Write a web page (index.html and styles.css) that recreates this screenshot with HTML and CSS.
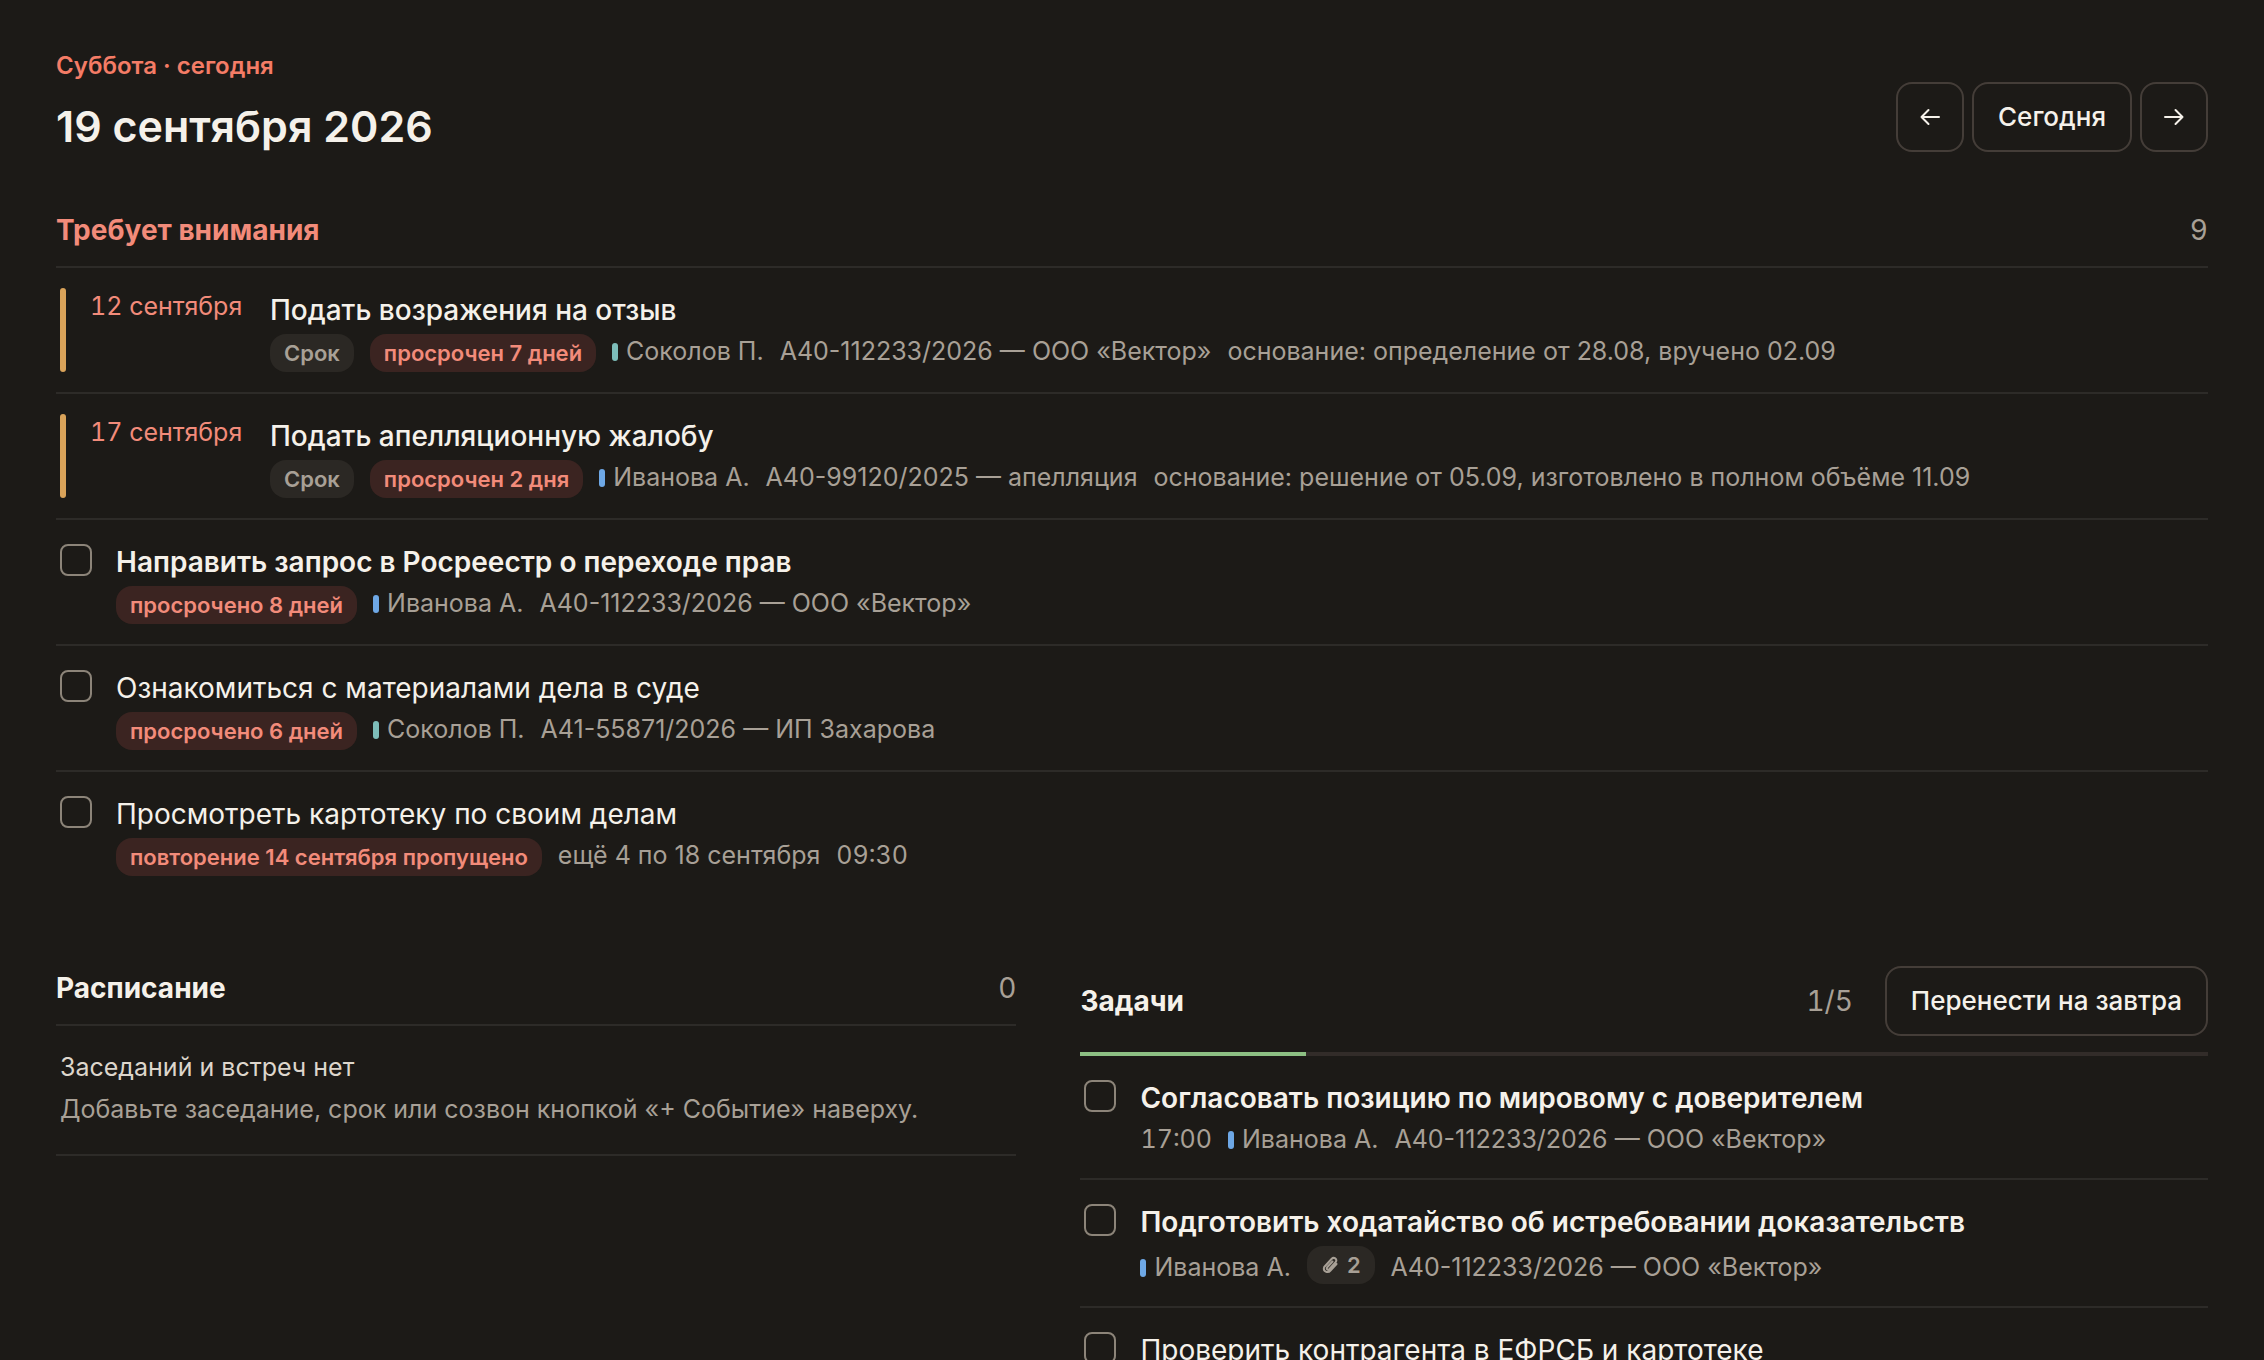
FILE: index.html
```
<!DOCTYPE html>
<html lang="ru">
<head>
    <meta charset="UTF-8">
    <meta name="viewport" content="width=device-width, initial-scale=1.0">
    <title>19 сентября 2026</title>
    <link rel="stylesheet" href="styles.css">
</head>
<body>
    <main class="day">
        <header class="day-header">
            <div>
                <p class="weekday">Суббота · сегодня</p>
                <h1>19 сентября 2026</h1>
            </div>
            <nav class="day-nav">
                <button class="btn btn-icon" aria-label="Предыдущий день">
                    <svg width="20" height="18" viewBox="0 0 20 18"><path d="M19 9H1.500M8.500 2L1.500 9L8.500 16"/></svg>
                </button>
                <button class="btn">Сегодня</button>
                <button class="btn btn-icon" aria-label="Следующий день">
                    <svg width="20" height="18" viewBox="0 0 20 18"><path d="M1 9H18.500M11.500 2L18.500 9L11.500 16"/></svg>
                </button>
            </nav>
        </header>

        <section class="attention">
            <div class="section-head">
                <h2 class="danger">Требует внимания</h2>
                <span class="count">9</span>
            </div>
            <ul class="list">
                <li class="row event">
                    <span class="event-bar"></span>
                    <span class="event-date">12 сентября</span>
                    <div class="row-body">
                        <div class="title medium">Подать возражения на отзыв</div>
                        <div class="meta">
                            <span class="chip">Срок</span>
                            <span class="chip overdue">просрочен 7 дней</span>
                            <span class="person teal">Соколов П.</span>
                            <span>А40-112233/2026 — ООО «Вектор»</span>
                            <span>основание: определение от 28.08, вручено 02.09</span>
                        </div>
                    </div>
                </li>
                <li class="row event">
                    <span class="event-bar"></span>
                    <span class="event-date">17 сентября</span>
                    <div class="row-body">
                        <div class="title medium">Подать апелляционную жалобу</div>
                        <div class="meta">
                            <span class="chip">Срок</span>
                            <span class="chip overdue">просрочен 2 дня</span>
                            <span class="person blue">Иванова А.</span>
                            <span>А40-99120/2025 — апелляция</span>
                            <span>основание: решение от 05.09, изготовлено в полном объёме 11.09</span>
                        </div>
                    </div>
                </li>
                <li class="row">
                    <input type="checkbox" id="late1">
                    <div class="row-body">
                        <label for="late1" class="title strong">Направить запрос в Росреестр о переходе прав</label>
                        <div class="meta">
                            <span class="chip overdue">просрочено 8 дней</span>
                            <span class="person blue">Иванова А.</span>
                            <span>А40-112233/2026 — ООО «Вектор»</span>
                        </div>
                    </div>
                </li>
                <li class="row">
                    <input type="checkbox" id="late2">
                    <div class="row-body">
                        <label for="late2" class="title">Ознакомиться с материалами дела в суде</label>
                        <div class="meta">
                            <span class="chip overdue">просрочено 6 дней</span>
                            <span class="person teal">Соколов П.</span>
                            <span>А41-55871/2026 — ИП Захарова</span>
                        </div>
                    </div>
                </li>
                <li class="row">
                    <input type="checkbox" id="late3">
                    <div class="row-body">
                        <label for="late3" class="title">Просмотреть картотеку по своим делам</label>
                        <div class="meta">
                            <span class="chip overdue">повторение 14 сентября пропущено</span>
                            <span>ещё 4 по 18 сентября</span>
                            <span class="time">09:30</span>
                        </div>
                    </div>
                </li>
            </ul>
        </section>

        <div class="columns">
            <section>
                <div class="section-head schedule-head">
                    <h2>Расписание</h2>
                    <span class="count">0</span>
                </div>
                <div class="empty">
                    <p class="empty-title">Заседаний и встреч нет</p>
                    <p>Добавьте заседание, срок или созвон кнопкой «+ Событие» наверху.</p>
                </div>
            </section>

            <section>
                <div class="section-head tasks-head">
                    <h2>Задачи</h2>
                    <span class="count">1/5</span>
                    <button class="btn">Перенести на завтра</button>
                </div>
                <div class="progress"><div class="progress-fill" style="width: 20%"></div></div>
                <ul class="list">
                    <li class="row">
                        <input type="checkbox" id="task1">
                        <div class="row-body">
                            <label for="task1" class="title strong">Согласовать позицию по мировому с доверителем</label>
                            <div class="meta">
                                <span class="time">17:00</span>
                                <span class="person blue">Иванова А.</span>
                                <span>А40-112233/2026 — ООО «Вектор»</span>
                            </div>
                        </div>
                    </li>
                    <li class="row">
                        <input type="checkbox" id="task2">
                        <div class="row-body">
                            <label for="task2" class="title strong">Подготовить ходатайство об истребовании доказательств</label>
                            <div class="meta with-files">
                                <span class="person blue">Иванова А.</span>
                                <span class="chip files">
                                    <svg width="18" height="18" viewBox="0 0 16 18"><path d="M14.500 8L8.500 14.500C6 17.500 0.500 15.500 2.200 11L9.500 3C12 0.500 15.500 3 13.800 6L7.500 13C6 14.500 4 13 5.200 11.200L10.500 5.500"/></svg>
                                    2
                                </span>
                                <span>А40-112233/2026 — ООО «Вектор»</span>
                            </div>
                        </div>
                    </li>
                    <li class="row">
                        <input type="checkbox" id="task3">
                        <div class="row-body">
                            <label for="task3" class="title">Проверить контрагента в ЕФРСБ и картотеке</label>
                        </div>
                    </li>
                </ul>
            </section>
        </div>
    </main>
</body>
</html>
```
FILE: styles.css
```
* {
    box-sizing: border-box;
}
body {
    margin: 0;
    height: 100vh;
    overflow: hidden;
    background-color: #1c1a17;
    color: #f5f1ea;
    font-family: Inter, "Noto Sans", sans-serif;
    font-size: 25px;
    line-height: 36px;
}
h1, h2, p, ul {
    margin: 0;
    padding: 0;
}
.day {
    padding: 48px 56px 0;
}
.day-header {
    display: flex;
    justify-content: space-between;
    align-items: flex-end;
}
.weekday {
    color: #f47c66;
    font-size: 24px;
    font-weight: 600;
}
h1 {
    margin-top: 12px;
    font-size: 43px;
    font-weight: 600;
    line-height: 60px;
}
.day-nav {
    display: flex;
    gap: 8px;
    padding-bottom: 4px;
}
.btn {
    height: 70px;
    padding: 0 24px;
    border: 2px solid #443d38;
    border-radius: 16px;
    background: none;
    color: inherit;
    font: inherit;
    font-size: 26px;
    font-weight: 500;
    cursor: pointer;
}
.btn-icon {
    width: 68px;
    padding: 0;
}
svg {
    fill: none;
    stroke: currentColor;
    stroke-width: 2;
    stroke-linecap: round;
    stroke-linejoin: round;
}
.btn svg {
    display: block;
    margin: 0 auto;
}
.attention {
    margin-top: 54px;
}
.section-head {
    display: flex;
    justify-content: space-between;
    align-items: center;
    padding-bottom: 16px;
    border-bottom: 2px solid #2d2b28;
}
h2 {
    font-size: 28px;
    font-weight: 700;
    line-height: 40px;
}
.danger {
    color: #f28b7a;
}
.count {
    color: #a8a096;
    font-size: 28px;
    font-variant-numeric: tabular-nums;
    line-height: 40px;
}
.list {
    list-style: none;
}
.row {
    display: flex;
    padding: 20px 4px;
    border-bottom: 2px solid #2d2b28;
}
.row:last-child {
    border-bottom: none;
}
.row input {
    appearance: none;
    flex: none;
    width: 32px;
    height: 32px;
    margin: 4px 24px 0 0;
    border: 2px solid #8c8479;
    border-radius: 8px;
}
.event-bar {
    width: 6px;
    margin-right: 24px;
    border-radius: 3px;
    background-color: #d9a35a;
}
.event-date {
    min-width: 156px;
    margin-right: 24px;
    color: #f28b7a;
    font-variant-numeric: tabular-nums;
}
.title {
    display: block;
    font-size: 28px;
    line-height: 44px;
}
.medium {
    font-weight: 500;
}
.strong {
    font-weight: 600;
}
.meta {
    display: flex;
    flex-wrap: wrap;
    align-items: flex-start;
    column-gap: 16px;
    color: #a8a096;
    line-height: 38px;
}
.with-files {
    align-items: flex-end;
}
.time {
    font-variant-numeric: tabular-nums;
}
.chip {
    margin-top: 2px;
    padding: 0 14px;
    border-radius: 16px;
    background-color: #2b2824;
    font-size: 22px;
    font-weight: 600;
}
.overdue {
    background-color: #3b2421;
    color: #f28b7a;
}
.files {
    display: flex;
    align-items: center;
    gap: 8px;
    margin-bottom: 2px;
}
.person {
    display: flex;
    align-items: center;
    gap: 8px;
}
.person::before {
    content: "";
    width: 6px;
    height: 18px;
    margin-top: 2px;
    border-radius: 3px;
    background-color: #6ea8e6;
}
.teal::before {
    background-color: #7dbdb9;
}
.columns {
    display: grid;
    grid-template-columns: 46fr 54fr;
    column-gap: 64px;
    margin-top: 70px;
}
.schedule-head {
    padding-top: 2px;
}
.empty {
    padding: 20px 4px 24px;
    border-bottom: 2px solid #2d2b28;
    color: #a8a096;
    line-height: 42px;
}
.empty-title {
    color: #ddd6cc;
}
.tasks-head {
    border-bottom: none;
}
.tasks-head .count {
    margin: 0 32px 0 auto;
}
.progress {
    height: 4px;
    background-color: #322c29;
}
.progress-fill {
    height: 4px;
    background-color: #8dbf83;
}
```
